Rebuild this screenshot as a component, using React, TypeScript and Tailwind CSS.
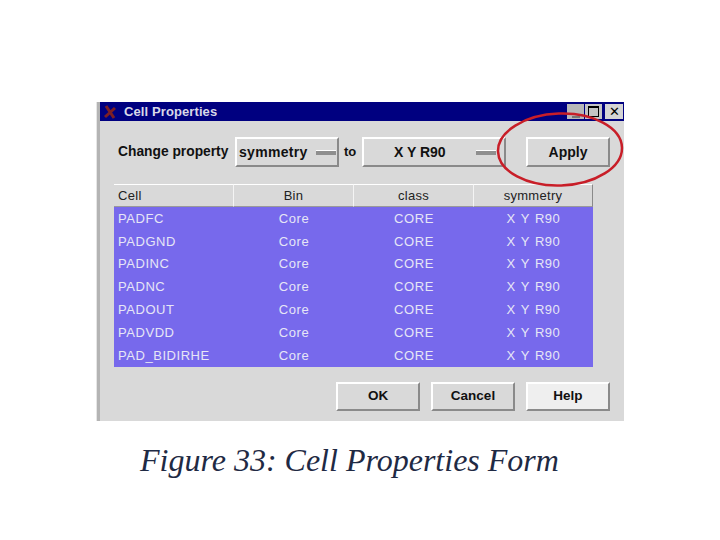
const rows = ["PADFC", "PADGND", "PADINC", "PADNC", "PADOUT", "PADVDD", "PAD_BIDIRHE"];

function Raised({ className, children }: { className: string; children: React.ReactNode }) {
  return (
    <div className={`flex items-center h-full border-2 border-t-white border-l-white border-r-[#8a8a8a] border-b-[#8a8a8a] font-bold text-[#111] ${className}`}>
      {children}
    </div>
  );
}

const Dash = () => <span className="w-[20px] h-[5px] bg-[#8f8f8f] border-t border-t-white shrink-0" />;

const cell = "flex items-center justify-center w-[120px] h-full";

export default function App() {
  return (
    <div className="relative w-[720px] h-[540px] bg-white overflow-hidden font-['Liberation_Sans',Arial,sans-serif]">
      <div className="flex flex-col items-start pt-[102px] pl-[96px]">
        <div className="flex w-[528px] h-[319px] bg-[#d9d9d9]">
          <div className="w-[4px] h-full bg-[#b4b4b4] border-l border-l-[#e6e6e6]" />
          <div className="flex-1 flex flex-col">
            {/* title bar */}
            <div className="flex items-center h-[19px] bg-[#000080] text-white">
              <svg width="14" height="14" viewBox="0 0 14 14" className="ml-[3px]">
                <path d="M3 1 L11 13 M12 3 L2 12" stroke="#7c1f24" strokeWidth="3" />
              </svg>
              <span className="ml-[7px] text-[13px] tracking-[0.1px] font-bold text-[#d8d8e8]">Cell Properties</span>
              <div className="ml-auto flex items-center h-full gap-[1px] pr-[1px]">
                <div className="w-[17px] h-[15px] bg-[#b8b8b8] flex items-end justify-center pb-[1px]">
                  <span className="w-[8px] h-[2px] bg-[#777]" />
                </div>
                <div className="w-[17px] h-[15px] bg-[#c4c4c4] flex items-center justify-center">
                  <span className="w-[11px] h-[11px] border border-black border-t-2" />
                </div>
                <div className="w-[18px] h-[15px] bg-[#d4d4d4] ml-[2px] flex items-center justify-center text-[13px] leading-none text-black">✕</div>
              </div>
            </div>

            {/* change property row */}
            <div className="flex items-center h-[30px] mt-[16px] ml-[18px]">
              <span className="w-[117px] text-[13.8px] font-bold text-[#111] whitespace-nowrap">Change property</span>
              <Raised className="w-[104px] pl-[2px] pr-[1px] justify-between text-[14px]">
                <span className="tracking-[0.3px]">symmetry</span>
                <Dash />
              </Raised>
              <span className="w-[23px] pl-[5px] text-[13px] font-bold text-[#111]">to</span>
              <Raised className="w-[144px] pl-[30px] pr-[8px] justify-between text-[14px]">
                <span>X Y R90</span>
                <Dash />
              </Raised>
              <Raised className="w-[84px] ml-[20px] justify-center text-[14px]">Apply</Raised>
            </div>

            {/* table */}
            <div className="flex flex-col w-[479px] mt-[17px] ml-[14px]">
              <div className="flex h-[23px] text-[13px] text-[#222] tracking-[0.3px]">
                <div className="flex items-center w-[120px] pl-[4px] border-t border-t-white border-r border-r-[#f4f4f4] border-b border-b-[#9a9a9a]">Cell</div>
                <div className="flex items-center justify-center w-[120px] border-t border-t-white border-r border-r-[#f4f4f4] border-b border-b-[#9a9a9a]">Bin</div>
                <div className="flex items-center justify-center w-[120px] border-t border-t-white border-r border-r-[#f4f4f4] border-b border-b-[#9a9a9a]">class</div>
                <div className="flex items-center justify-center w-[119px] border-t border-t-white border-r border-r-[#8a8a8a] border-b border-b-[#9a9a9a]">symmetry</div>
              </div>
              <div className="flex flex-col h-[160px] bg-[#7769ec] text-[13px] text-[#e6e6f6] tracking-[0.55px]">
                {rows.map((name) => (
                  <div key={name} className="flex items-center flex-1">
                    <div className="flex items-center w-[120px] h-full pl-[4px]">{name}</div>
                    <div className={cell}>Core</div>
                    <div className={cell}>CORE</div>
                    <div className="flex items-center justify-center w-[119px] h-full [word-spacing:1px]">X Y R90</div>
                  </div>
                ))}
              </div>
            </div>

            {/* buttons */}
            <div className="flex h-[29px] mt-[15px] ml-[236px]">
              <Raised className="w-[84px] justify-center text-[13.5px]">OK</Raised>
              <Raised className="w-[84px] ml-[11px] justify-center text-[13.5px]">Cancel</Raised>
              <Raised className="w-[84px] ml-[11px] justify-center bg-[#efefef] text-[13.5px]">Help</Raised>
            </div>
          </div>
        </div>
        <div className="w-[528px] mt-[21px] pl-[44px] text-[32px] leading-[36px] italic text-[#1f2a44] font-['Liberation_Serif','Times_New_Roman',serif] whitespace-nowrap">
          Figure 33: Cell Properties Form
        </div>
      </div>

      {/* red annotation circle */}
      <svg className="absolute left-[490px] top-[105px]" width="140" height="90" viewBox="0 0 140 90" fill="none">
        <ellipse cx="70" cy="44.5" rx="62" ry="36" stroke="#c81e28" strokeWidth="2.5" transform="rotate(-2 70 44.5)" />
      </svg>
    </div>
  );
}
